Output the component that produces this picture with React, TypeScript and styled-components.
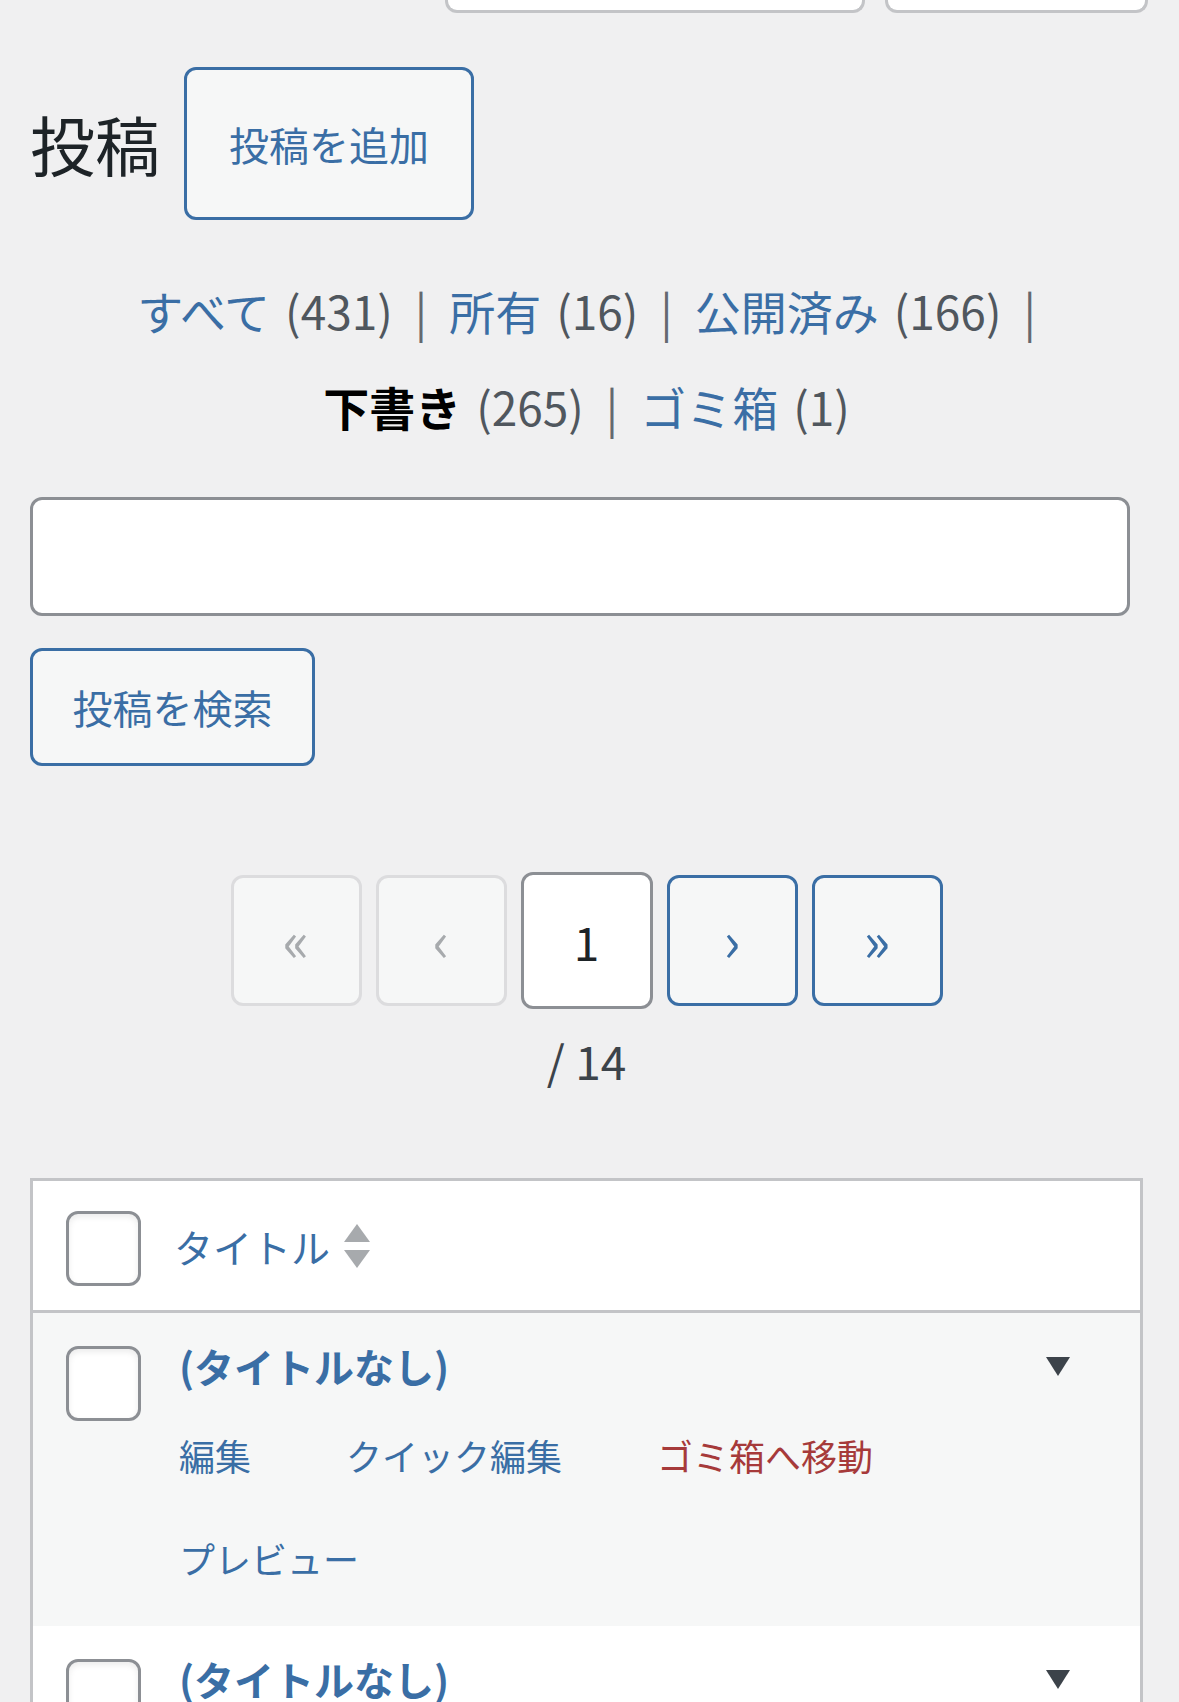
import React from "react";
import styled, { createGlobalStyle } from "styled-components";

const BLUE = "#3a6ea5";
const RED = "#a63a3a";
const FONT = `"Noto Sans CJK JP", "Noto Sans", "Liberation Sans", sans-serif`;

const Global = createGlobalStyle`
  html, body { margin: 0; padding: 0; background: #f0f0f1; }
  body { font-family: ${FONT}; color: #3c434a; }
  * { box-sizing: border-box; }
`;

const Page = styled.div`
  padding: 0 36px 40px 30px;
  min-height: 1702px;
  overflow: hidden;
`;

const TopBar = styled.div`
  display: flex;
  justify-content: flex-end;
  gap: 20px;
  margin-right: -5px;
`;

const CutBox = styled.div<{ $w: number }>`
  width: ${(p) => p.$w}px;
  height: 13px;
  background: #fff;
  border: 3px solid #c3c4c7;
  border-top: none;
  border-radius: 0 0 12px 12px;
`;

const HeaderRow = styled.div`
  display: flex;
  align-items: center;
  margin-top: 54px;
`;

const Title = styled.h1`
  margin: 0;
  font-size: 65px;
  font-weight: 400;
  line-height: 1;
  color: #1d2327;
`;

const OutlineButton = styled.button<{ $w: number }>`
  display: inline-flex;
  align-items: center;
  justify-content: center;
  width: ${(p) => p.$w}px;
  height: 153px;
  padding: 0;
  background: #f6f7f7;
  border: 3px solid ${BLUE};
  border-radius: 12px;
  color: ${BLUE};
  font-family: ${FONT};
  font-size: 40px;
  cursor: pointer;
`;

const AddButton = styled(OutlineButton)`
  margin-left: 24px;
`;

const Filters = styled.ul`
  list-style: none;
  margin: 42px 0 0;
  padding: 0;
  text-align: center;
  font-size: 46px;
  line-height: 96px;
  color: #646970;
`;

const FilterItem = styled.li`
  display: inline;
  white-space: nowrap;
`;

const FilterBreak = styled.li`
  display: block;
  height: 0;
`;

const FilterLink = styled.a<{ $current?: boolean }>`
  color: ${(p) => (p.$current ? "#000" : BLUE)};
  font-weight: ${(p) => (p.$current ? 700 : 400)};
  text-decoration: none;
`;

const Count = styled.span`
  color: #50575e;
  font-weight: 400;
  margin-left: 15px;
`;

const Sep = styled.span<{ $end?: boolean }>`
  color: #646970;
  margin: 0 ${(p) => (p.$end ? 0 : 22)}px 0 22px;
`;

const SearchInput = styled.input`
  display: block;
  width: 1100px;
  height: 119px;
  margin-top: 43px;
  background: #fff;
  border: 3px solid #8c8f94;
  border-radius: 12px;
  font-size: 48px;
  font-family: ${FONT};
  padding: 0 24px;
`;

const SearchButton = styled(OutlineButton)`
  display: flex;
  margin-top: 32px;
  height: 118px;
`;

const Pager = styled.div`
  display: flex;
  justify-content: center;
  align-items: center;
  gap: 14px;
  margin-top: 106px;
`;

const PageButton = styled.span<{ $disabled?: boolean }>`
  display: flex;
  align-items: center;
  justify-content: center;
  width: 131px;
  height: 131px;
  border-radius: 12px;
  background: #f6f7f7;
  border: 3px solid ${(p) => (p.$disabled ? "#dcdcde" : BLUE)};
  color: ${(p) => (p.$disabled ? "#a7aaad" : BLUE)};
  font-size: 56px;
  line-height: 1;
  padding-bottom: 6px;
`;

const CurrentPage = styled.input`
  width: 132px;
  height: 137px;
  border: 3px solid #8c8f94;
  border-radius: 12px;
  background: #fff;
  color: #1d2327;
  font-family: ${FONT};
  font-size: 46px;
  font-weight: 400;
  text-align: center;
  padding: 0;
`;

const TotalPages = styled.div`
  text-align: center;
  margin-top: 18px;
  font-size: 46px;
  line-height: 66px;
  color: #3c434a;
`;

const Table = styled.div`
  margin-top: 85px;
  width: 1113px;
  border: 3px solid #c3c4c7;
  background: #fff;
`;

const HeadRow = styled.div`
  display: flex;
  align-items: center;
  height: 132px;
  padding: 5px 0 0 33px;
  border-bottom: 3px solid #c3c4c7;
  background: #fff;
`;

const Checkbox = styled.span`
  display: block;
  flex: none;
  width: 75px;
  height: 75px;
  background: #fff;
  border: 3px solid #8c8f94;
  border-radius: 12px;
  box-shadow: inset 0 3px 6px rgba(0, 0, 0, 0.08);
`;

const HeadLabel = styled.a`
  display: flex;
  align-items: center;
  margin-left: 33px;
  margin-top: -5px;
  color: ${BLUE};
  font-size: 39px;
  text-decoration: none;
  gap: 14px;
`;

const PostRow = styled.div<{ $alt?: boolean }>`
  display: flex;
  align-items: flex-start;
  padding: 33px 0 38px 33px;
  background: ${(p) => (p.$alt ? "#f6f7f7" : "#fff")};
`;

const RowBody = styled.div`
  flex: 1;
  margin-left: 38px;
  margin-top: -10px;
`;

const TitleLine = styled.div`
  display: flex;
  align-items: center;
  justify-content: space-between;
  padding-right: 70px;
  height: 60px;
`;

const PostTitle = styled.a`
  color: ${BLUE};
  font-weight: 700;
  font-size: 40px;
  text-decoration: none;
`;

const Actions = styled.div`
  display: flex;
  flex-wrap: wrap;
  column-gap: 95px;
  row-gap: 43px;
  margin-top: 29px;
  font-size: 36px;
  line-height: 60px;
`;

const Action = styled.a<{ $danger?: boolean }>`
  color: ${(p) => (p.$danger ? RED : BLUE)};
  text-decoration: none;
`;

const SortIcon = () => (
  <svg width="26" height="44" viewBox="0 0 26 44">
    <polygon points="13,0 26,18 0,18" fill="#a7aaad" />
    <polygon points="0,26 26,26 13,44" fill="#a7aaad" />
  </svg>
);

const ToggleIcon = () => (
  <svg width="24" height="19" viewBox="0 0 24 19">
    <polygon points="0,0 24,0 12,19" fill="#3c434a" />
  </svg>
);

const PostRowItem = ({ alt, showActions }: { alt?: boolean; showActions?: boolean }) => (
  <PostRow $alt={alt}>
    <Checkbox />
    <RowBody>
      <TitleLine>
        <PostTitle href="#">(タイトルなし)</PostTitle>
        <ToggleIcon />
      </TitleLine>
      {showActions && (
        <Actions>
          <Action href="#">編集</Action>
          <Action href="#">クイック編集</Action>
          <Action href="#" $danger>
            ゴミ箱へ移動
          </Action>
          <Action href="#">プレビュー</Action>
        </Actions>
      )}
    </RowBody>
  </PostRow>
);

export default function App() {
  return (
    <>
      <Global />
      <Page>
        <TopBar>
          <CutBox $w={420} />
          <CutBox $w={263} />
        </TopBar>
        <HeaderRow>
          <Title>投稿</Title>
          <AddButton $w={290}>投稿を追加</AddButton>
        </HeaderRow>
        <Filters>
          <FilterItem>
            <FilterLink href="#">
              すべて<Count>(431)</Count>
            </FilterLink>
            <Sep>|</Sep>
          </FilterItem>
          <FilterItem>
            <FilterLink href="#">
              所有<Count>(16)</Count>
            </FilterLink>
            <Sep>|</Sep>
          </FilterItem>
          <FilterItem>
            <FilterLink href="#">
              公開済み<Count>(166)</Count>
            </FilterLink>
            <Sep $end>|</Sep>
          </FilterItem>
          <FilterBreak />
          <FilterItem>
            <FilterLink href="#" $current>
              下書き<Count>(265)</Count>
            </FilterLink>
            <Sep>|</Sep>
          </FilterItem>
          <FilterItem>
            <FilterLink href="#">
              ゴミ箱<Count>(1)</Count>
            </FilterLink>
          </FilterItem>
        </Filters>
        <SearchInput type="search" />
        <SearchButton $w={285}>投稿を検索</SearchButton>
        <Pager>
          <PageButton $disabled>«</PageButton>
          <PageButton $disabled>‹</PageButton>
          <CurrentPage value="1" readOnly />
          <PageButton>›</PageButton>
          <PageButton>»</PageButton>
        </Pager>
        <TotalPages>/ 14</TotalPages>
        <Table>
          <HeadRow>
            <Checkbox />
            <HeadLabel href="#">
              タイトル
              <SortIcon />
            </HeadLabel>
          </HeadRow>
          <PostRowItem alt showActions />
          <PostRowItem />
        </Table>
      </Page>
    </>
  );
}
